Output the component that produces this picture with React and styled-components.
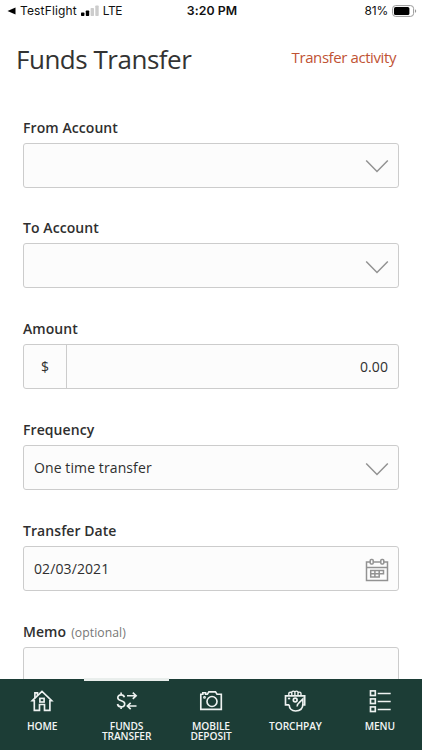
import React from 'react';
import styled, { createGlobalStyle } from 'styled-components';

const GlobalStyle = createGlobalStyle`
  * {
    box-sizing: border-box;
  }
  body {
    margin: 0;
    background: #ffffff;
    overflow: hidden;
  }
`;

const Screen = styled.div`
  display: flex;
  flex-direction: column;
  width: 422px;
  height: 750px;
  overflow: hidden;
  background: #ffffff;
  color: #2f2f2f;
  font-family: 'Open Sans', sans-serif;
`;

const StatusBar = styled.div`
  flex: none;
  display: grid;
  grid-template-columns: 1fr auto 1fr;
  align-items: center;
  height: 22px;
  padding: 0 5px 0 7px;
  color: #111111;
  font-family: Inter, sans-serif;
  font-size: 12px;
  line-height: 22px;
`;

const StatusGroup = styled.div`
  display: flex;
  align-items: center;
  justify-content: ${(props) => (props.$end ? 'flex-end' : 'flex-start')};
  gap: 4px;
`;

const StatusText = styled.span`
  letter-spacing: ${(props) => props.$spacing || '0'};
`;

const Clock = styled.div`
  font-size: 12.3px;
  font-weight: 600;
  letter-spacing: 0.1px;
`;

const Header = styled.header`
  flex: none;
  display: flex;
  align-items: center;
  justify-content: space-between;
  height: 74px;
  padding: 0 26px 0 16px;
`;

const Title = styled.h1`
  margin: 0;
  font-size: 26px;
  font-weight: 400;
  line-height: 36px;
  letter-spacing: -0.48px;
  color: #333333;
`;

const ActivityLink = styled.a`
  margin-top: -5px;
  font-size: 15px;
  line-height: 20px;
  letter-spacing: -0.41px;
  color: #bf5334;
`;

const Form = styled.form`
  flex: 1;
  min-height: 0;
  overflow: hidden;
  padding: 20.5px 23px 0;
`;

const Field = styled.div`
  height: 100.9px;
`;

const Label = styled.label`
  display: flex;
  align-items: baseline;
  gap: 5px;
  height: 26px;
  font-size: 14px;
  font-weight: 600;
  line-height: 21px;
  letter-spacing: 0.07px;
`;

const Optional = styled.span`
  font-size: 12.2px;
  font-weight: 400;
  color: #777777;
`;

const Control = styled.div`
  display: flex;
  align-items: center;
  justify-content: space-between;
  height: 45px;
  padding: 0 10px;
  border: 1px solid #cccccc;
  border-radius: 3px;
  background: #fcfcfc;
  font-size: 14px;
  letter-spacing: 0.1px;
`;

const AmountControl = styled(Control)`
  padding-left: 0;
`;

const Currency = styled.span`
  display: flex;
  align-items: center;
  justify-content: center;
  width: 43px;
  height: 100%;
  border-right: 1px solid #cccccc;
`;

const Value = styled.span`
  line-height: 20px;
`;

const FieldIcon = styled.svg`
  flex: none;
  width: 24px;
  height: 24px;
  margin: 2px -1px 0 auto;
  fill: none;
  stroke: #929292;
  stroke-width: 1.5;
`;

const NavBar = styled.nav`
  flex: none;
  display: grid;
  grid-template-columns: repeat(5, 1fr);
  height: 71.5px;
  background: #1c3d36;
`;

const NavItem = styled.a`
  display: flex;
  flex-direction: column;
  align-items: center;
  margin-top: -0.5px;
  padding-top: 8px;
  border-top: 3px solid ${(props) => (props.$active ? '#e9eeec' : 'transparent')};
  color: #f2f5f4;
`;

const NavIcon = styled.svg`
  flex: none;
  width: 24px;
  height: 24px;
  fill: none;
  stroke: #eef2f1;
  stroke-width: 1.65;
`;

const NavLabel = styled.span`
  margin-top: 8px;
  font-size: 10.2px;
  font-weight: 600;
  line-height: 10px;
  letter-spacing: -0.1px;
  text-align: center;
  white-space: pre-line;
`;

const SignalIcon = () => (
  <svg width="18" height="12" viewBox="0 0 18 12">
    <rect x="0" y="7.5" width="3.4" height="3.5" rx="0.7" fill="#000" />
    <rect x="4.8" y="5.5" width="3.4" height="5.5" rx="0.7" fill="#000" />
    <rect x="9.6" y="3" width="3.4" height="8" rx="0.7" fill="#ccc" />
    <rect x="14.3" y="0.5" width="3.4" height="10.5" rx="0.7" fill="#ccc" />
  </svg>
);

const BatteryIcon = () => (
  <svg width="25" height="12" viewBox="0 0 25 12">
    <rect x="0.6" y="0.6" width="21" height="10.8" rx="3" fill="none" stroke="#999" />
    <rect x="2" y="2" width="15.4" height="8" rx="1.6" fill="#000" />
    <path d="M23 4.2c1.6.5 1.6 3.1 0 3.6z" fill="#999" />
  </svg>
);

const ChevronIcon = () => (
  <FieldIcon viewBox="0 0 24 24">
    <path d="M1.2 6.500 12 17.500 22.800 6.500" />
  </FieldIcon>
);

const CalendarIcon = () => (
  <FieldIcon viewBox="0 0 24 24">
    <path d="M5 4H1.500v18.500h21V4H19M8.500 4h7M1.500 9.500h21" />
    <rect x="5.200" y="1.500" width="3" height="4.500" rx="1" />
    <rect x="15.800" y="1.500" width="3" height="4.500" rx="1" />
    <path d="M5.700 12.500h12.800v3.200h-4.300v3.300H5.700zM5.700 15.700h8.500M9.900 12.500V19M14.200 12.500v3.200" />
  </FieldIcon>
);

const HomeIcon = () => (
  <NavIcon viewBox="0 0 24 24">
    <path d="M2.300 11.700 12 2.400l9.700 9.300h-1.800v9.600h-5.400v-5.800h-5v5.800H4.300v-9.600H2.300z" />
    <path d="M4.900 9V3.900h2.600v2.400" />
    <rect x="9.900" y="9.400" width="4.200" height="3.600" />
  </NavIcon>
);

const FundsIcon = () => (
  <NavIcon viewBox="0 0 24 24">
    <path d="M9.400 8.300C9 6.500 7.800 5.800 6.100 5.800c-2 0-3.300 1-3.300 2.900 0 4 6.900 2 6.900 6 0 2-1.500 3.100-3.500 3.100S2.800 16.900 2.500 15M6.100 3.600v2.200M6.100 17.800v2.200" />
    <path d="M12 6.700h9M17.800 3.600l3.300 3.100-3.300 3.100M21.500 17h-9M15.700 13.800l-3.300 3.200 3.300 3.200" />
  </NavIcon>
);

const CameraIcon = () => (
  <NavIcon viewBox="0 0 24 24">
    <path d="M1.800 20.300V5.200h2V3.700h2.800v1.500h1.800l1.500-2.300h6.600L18 5.200h4.300v15.100z" />
    <circle cx="13" cy="12.500" r="5" />
    <circle cx="5.500" cy="8.400" r=".6" />
  </NavIcon>
);

const PayIcon = () => (
  <NavIcon viewBox="0 0 24 24">
    <path d="M6.200 15.800H2.500V6.900h19.200v8.900h-1.500" />
    <path d="M5.800 6.500V4.600c0-1.800 3-1.800 3 0v1.900M8.800 6.500V3.300c0-1.600 3.100-1.600 3.100 0v3.200M11.900 6.500V3.300c0-1.600 3.100-1.600 3.100 0v3.200M15 6.500V4.400c0-1.700 3-1.700 3 0v2.100" strokeWidth="1.400" />
    <path d="M6.200 15.800c0 3.700 2.500 6.200 6.300 6.200 5 0 7.400-3 7.400-7.200V10l-4.200 4.100c-1.300 1-1.800 1.800-1.400 3.400" />
    <circle cx="12.200" cy="11" r="1.900" />
    <path d="M4.900 9.500h2.300" />
  </NavIcon>
);

const MenuIcon = () => (
  <NavIcon viewBox="0 0 24 24">
    <rect x="2.500" y="1.900" width="4.800" height="4.600" />
    <rect x="2.500" y="9.900" width="4.800" height="4.600" />
    <rect x="2.500" y="17.900" width="4.800" height="4.600" />
    <path d="M9.700 4.500h13M9.700 12.500h13M9.700 20.500h13" />
  </NavIcon>
);

const navItems = [
  { label: 'HOME', icon: HomeIcon },
  { label: 'FUNDS\nTRANSFER', icon: FundsIcon, active: true },
  { label: 'MOBILE\nDEPOSIT', icon: CameraIcon },
  { label: 'TORCHPAY', icon: PayIcon },
  { label: 'MENU', icon: MenuIcon },
];

const App = () => {
  return (
    <>
      <GlobalStyle />
      <Screen>
        <StatusBar>
          <StatusGroup>
            <svg width="9" height="8" viewBox="0 0 9 8">
              <path d="M0.500 4 8.500 0.400v7.200z" fill="#000" />
            </svg>
            <StatusText $spacing="0.15px">TestFlight</StatusText>
            <SignalIcon />
            <StatusText $spacing="-0.5px">LTE</StatusText>
          </StatusGroup>
          <Clock>3:20 PM</Clock>
          <StatusGroup $end>
            <StatusText $spacing="-0.2px">81%</StatusText>
            <BatteryIcon />
          </StatusGroup>
        </StatusBar>

        <Header>
          <Title>Funds Transfer</Title>
          <ActivityLink>Transfer activity</ActivityLink>
        </Header>

        <Form>
          <Field>
            <Label>From Account</Label>
            <Control>
              <ChevronIcon />
            </Control>
          </Field>
          <Field>
            <Label>To Account</Label>
            <Control>
              <ChevronIcon />
            </Control>
          </Field>
          <Field>
            <Label>Amount</Label>
            <AmountControl>
              <Currency>$</Currency>
              <Value>0.00</Value>
            </AmountControl>
          </Field>
          <Field>
            <Label>Frequency</Label>
            <Control>
              <Value>One time transfer</Value>
              <ChevronIcon />
            </Control>
          </Field>
          <Field>
            <Label>Transfer Date</Label>
            <Control>
              <Value>02/03/2021</Value>
              <CalendarIcon />
            </Control>
          </Field>
          <Field>
            <Label>
              Memo <Optional>(optional)</Optional>
            </Label>
            <Control />
          </Field>
        </Form>

        <NavBar>
          {navItems.map(({ label, icon: Icon, active }) => (
            <NavItem key={label} $active={active}>
              <Icon />
              <NavLabel>{label}</NavLabel>
            </NavItem>
          ))}
        </NavBar>
      </Screen>
    </>
  );
};

export default App;
